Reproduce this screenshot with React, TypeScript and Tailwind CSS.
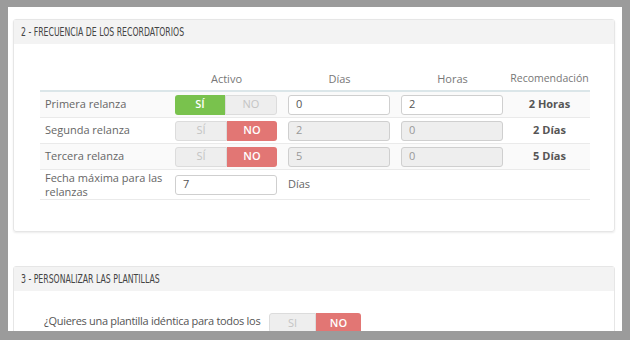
const body = "font-['Open_Sans',sans-serif]";
const head = "font-['DejaVu_Sans_Condensed','DejaVu_Sans',sans-serif]";

type Row = { label: string; on: boolean; dias: string; horas: string; rec: string };

const rows: Row[] = [
  { label: "Primera relanza", on: true, dias: "0", horas: "2", rec: "2 Horas" },
  { label: "Segunda relanza", on: false, dias: "2", horas: "0", rec: "2 Días" },
  { label: "Tercera relanza", on: false, dias: "5", horas: "0", rec: "5 Días" },
];

function Toggle({ on, width, si = "SÍ" }: { on: boolean; width: string; si?: string }) {
  return (
    <div className={`flex h-[20px] ${width} text-[11px]`}>
      {on ? (
        <>
          <div className="flex flex-1 items-center justify-center rounded-l-[3px] bg-[#79c24d] font-semibold text-white">{si}</div>
          <div className="flex flex-1 items-center justify-center rounded-r-[3px] border border-[#dcdcdc] bg-[#eeeeee] text-[#c4c4c4]">NO</div>
        </>
      ) : (
        <>
          <div className="flex flex-1 items-center justify-center rounded-l-[3px] border border-[#dcdcdc] bg-[#eeeeee] text-[#c4c4c4]">{si}</div>
          <div className="flex flex-1 items-center justify-center rounded-r-[3px] bg-[#e27674] font-semibold text-white">NO</div>
        </>
      )}
    </div>
  );
}

function Field({ value, disabled }: { value: string; disabled?: boolean }) {
  return (
    <div
      className={`flex h-[20px] w-[102px] items-center rounded-[3px] border border-[#cfcfcf] pl-[7px] text-[11px] ${
        disabled ? "bg-[#eeeeee] text-[#999]" : "bg-white text-[#555]"
      }`}
    >
      {value}
    </div>
  );
}

function PanelHeader({ children }: { children: string }) {
  return (
    <div className="flex h-[24px] items-center bg-[#f3f3f3] pl-[7px]">
      <span className={`origin-left scale-x-[0.72] whitespace-nowrap text-[12px] text-[#444] ${head}`}>{children}</span>
    </div>
  );
}

export default function App() {
  return (
    <div className={`h-[340px] w-[630px] overflow-hidden bg-[#9b9b9b] px-[8px] pt-[7px] ${body}`}>
      <div className="h-[324px] overflow-hidden bg-white pl-[5px] pr-[7px] pt-[12px]">
        <div className="h-[213px] rounded-[3px] border border-[#e6e6e6] shadow-[0_1px_2px_rgba(0,0,0,0.08)]">
          <PanelHeader>2 - FRECUENCIA DE LOS RECORDATORIOS</PanelHeader>
          <div className="ml-[26px] mt-[24px] w-[550px] text-[11px] text-[#666]">
            <div className="grid h-[24px] grid-cols-[130px_113px_113px_113px_81px] items-end border-b-2 border-[#dbe6e9] pb-[3px] text-[#777]">
              <div />
              <div className="text-center">Activo</div>
              <div className="text-center">Días</div>
              <div className="text-center">Horas</div>
              <div className="text-center text-[10.5px]">Recomendación</div>
            </div>
            {rows.map((r, i) => (
              <div
                key={r.label}
                className={`grid h-[26px] grid-cols-[130px_113px_113px_113px_81px] items-center border-b border-[#eaeaea] ${
                  i % 2 === 0 ? "bg-[#fafafa]" : "bg-white"
                }`}
              >
                <div className="pl-[5px]">{r.label}</div>
                <div className="pl-[5px]">
                  <Toggle on={r.on} width="w-[102px]" />
                </div>
                <div className="pl-[5px]">
                  <Field value={r.dias} disabled={!r.on} />
                </div>
                <div className="pl-[5px]">
                  <Field value={r.horas} disabled={!r.on} />
                </div>
                <div className="text-center font-bold text-[#555]">{r.rec}</div>
              </div>
            ))}
            <div className="grid h-[30px] grid-cols-[130px_113px_226px_81px] items-center border-b border-[#eaeaea]">
              <div className="pl-[5px] leading-[14px]">
                Fecha máxima para las
                <br />
                relanzas
              </div>
              <div className="pl-[5px]">
                <Field value="7" />
              </div>
              <div className="pl-[5px]">Días</div>
              <div />
            </div>
          </div>
        </div>
        <div className="mt-[34px] h-[120px] rounded-[3px] border border-[#e6e6e6]">
          <PanelHeader>3 - PERSONALIZAR LAS PLANTILLAS</PanelHeader>
          <div className="ml-[30px] mt-[22px] flex items-start">
            <div className="w-[225px] text-[11px] leading-[16px] tracking-[-0.3px] text-[#555]">
              ¿Quieres una plantilla idéntica para todos los recordatorios?
            </div>
            <Toggle on={false} width="w-[92px]" si="SI" />
          </div>
        </div>
      </div>
    </div>
  );
}
